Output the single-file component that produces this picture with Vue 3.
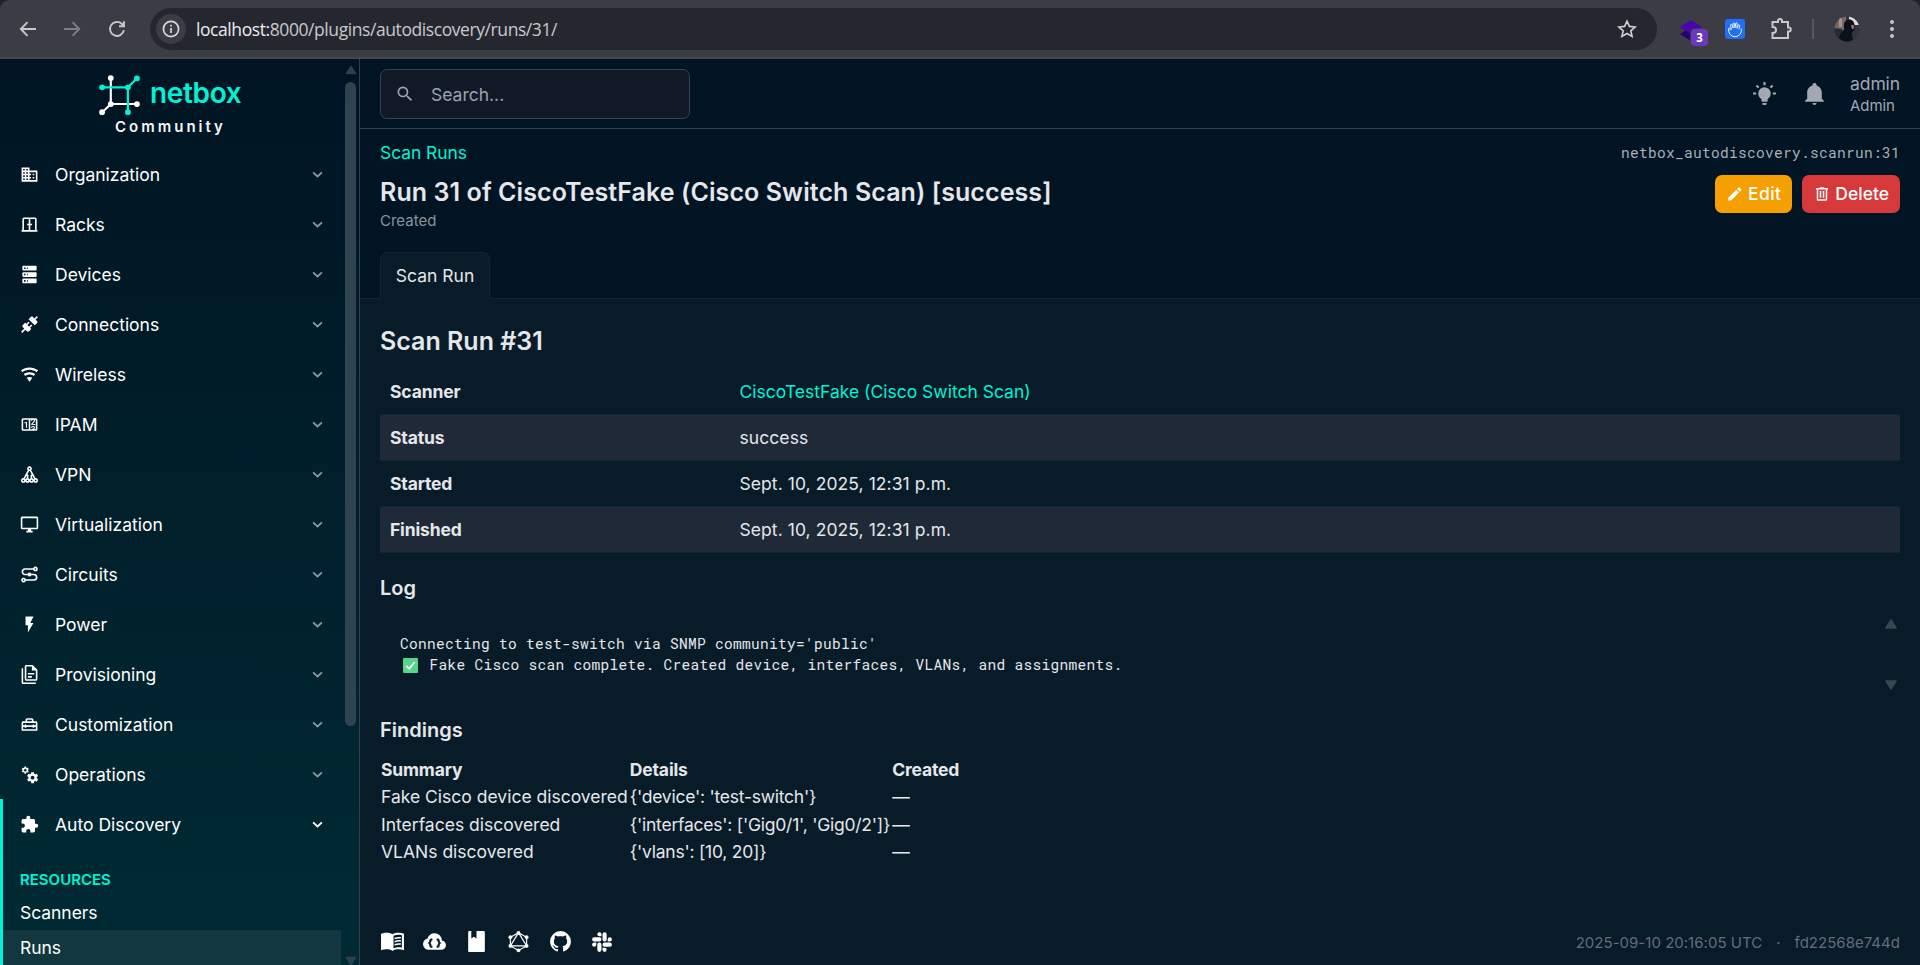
<script setup>
const icons = {
  domain: 'M18,15H16V17H18M18,11H16V13H18M20,19H12V17H14V15H12V13H14V11H12V9H20M10,7H8V5H10M10,11H8V9H10M10,15H8V13H10M10,19H8V17H10M6,7H4V5H6M6,11H4V9H6M6,15H4V13H6M6,19H4V17H6M12,7V3H2V21H22V7H12Z',
  door: 'M19,3H5A2,2 0 0,0 3,5V19H2V21H22V19H21V5A2,2 0 0,0 19,3M11,19H5V5H11V11H9V13H11V19M19,19H13V13H15V11H13V5H19V19Z',
  server: 'M4,1H20A1,1 0 0,1 21,2V6A1,1 0 0,1 20,7H4A1,1 0 0,1 3,6V2A1,1 0 0,1 4,1M4,9H20A1,1 0 0,1 21,10V14A1,1 0 0,1 20,15H4A1,1 0 0,1 3,14V10A1,1 0 0,1 4,9M4,17H20A1,1 0 0,1 21,18V22A1,1 0 0,1 20,23H4A1,1 0 0,1 3,22V18A1,1 0 0,1 4,17M9,5H10V3H9V5M9,13H10V11H9V13M9,21H10V19H9V21M5,3V5H7V3H5M5,11V13H7V11H5M5,19V21H7V19H5Z',
  connection: 'M21.4 7.5C22.2 8.3 22.2 9.6 21.4 10.3L18.6 13.1L10.8 5.3L13.6 2.5C14.4 1.7 15.7 1.7 16.4 2.5L18.2 4.3L21.2 1.3L22.6 2.7L19.6 5.7L21.4 7.5M15.6 13.3L14.2 11.9L11.4 14.7L9.3 12.6L12.1 9.8L10.7 8.4L7.9 11.2L6.4 9.8L3.6 12.6C2.8 13.4 2.8 14.7 3.6 15.4L5.4 17.2L1.4 21.2L2.8 22.6L6.8 18.6L8.6 20.4C9.4 21.2 10.7 21.2 11.4 20.4L14.2 17.6L12.8 16.2L15.6 13.3Z',
  wifi: 'M12,21L15.6,16.2C14.6,15.45 13.35,15 12,15C10.65,15 9.4,15.45 8.4,16.2L12,21M12,3C7.95,3 4.21,4.34 1.2,6.6L3,9C5.5,7.12 8.62,6 12,6C15.38,6 18.5,7.12 21,9L22.8,6.6C19.79,4.34 16.05,3 12,3M12,9C9.3,9 6.81,9.89 4.8,11.4L6.6,13.8C8.1,12.67 9.97,12 12,12C14.03,12 15.9,12.67 17.4,13.8L19.2,11.4C17.19,9.89 14.7,9 12,9Z',
  counter: 'M4,4H20A2,2 0 0,1 22,6V18A2,2 0 0,1 20,20H4A2,2 0 0,1 2,18V6A2,2 0 0,1 4,4M4,6V18H11V6H4M20,18V6H18.76C19,6.54 18.95,7.07 18.95,7.13C18.88,7.8 18.41,8.5 18.24,8.75L15.91,11.3L19.23,11.28L19.24,12.5L14.04,12.47L14,11.47C14,11.47 17.05,8.24 17.2,7.95C17.34,7.67 17.91,6 16.5,6C15.27,6.05 15.41,7.3 15.41,7.3L13.87,7.31C13.87,7.31 13.88,6.65 14.25,6H13V18H15.58L15.57,17.14L16.54,17.13C16.54,17.13 17.45,16.97 17.46,16.08C17.5,15.08 16.65,15.08 16.5,15.08C16.37,15.08 15.43,15.13 15.43,15.95H13.91C13.91,15.95 13.95,13.89 16.5,13.89C19.1,13.89 18.96,15.91 18.96,15.91C18.96,15.91 19,17.16 17.85,17.63L18.37,18H20M8.92,16H7.42V10.2L5.62,10.76V9.53L8.76,8.41H8.92V16Z',
  monitor: 'M21,16H3V4H21M21,2H3C1.89,2 1,2.89 1,4V16A2,2 0 0,0 3,18H10V20H8V22H16V20H14V18H21A2,2 0 0,0 23,16V4C23,2.89 22.1,2 21,2Z',
  flash: 'M7,2V13H10V22L17,10H13L17,2H7Z',
  files: 'M16,0H8C6.9,0 6,0.9 6,2V18C6,19.1 6.9,20 8,20H20C21.1,20 22,19.1 22,18V6L16,0M20,18H8V2H15V7H20V18M4,4V22H20V24H4C2.9,24 2,23.1 2,22V4H4M10,10V12H18V10H10M10,14V16H15V14H10Z',
  toolbox: 'M20,8H17V6C17,4.9 16.1,4 15,4H9C7.9,4 7,4.9 7,6V8H4C2.9,8 2,8.9 2,10V20H22V10C22,8.9 21.1,8 20,8M9,6H15V8H9V6M20,18H4V15H6V16H8V15H16V16H18V15H20V18M18,13V12H16V13H8V12H6V13H4V10H20V13H18Z',
  cogs: 'M15.9,18.45C17.25,18.45 18.35,17.35 18.35,16C18.35,14.65 17.25,13.55 15.9,13.55C14.54,13.55 13.45,14.65 13.45,16C13.45,17.35 14.54,18.45 15.9,18.45M21.1,16.68L22.58,17.84C22.71,17.95 22.75,18.13 22.66,18.29L21.26,20.71C21.17,20.86 21,20.92 20.83,20.86L19.09,20.16C18.73,20.44 18.33,20.67 17.91,20.85L17.64,22.7C17.62,22.87 17.47,23 17.3,23H14.5C14.32,23 14.18,22.87 14.15,22.7L13.89,20.85C13.46,20.67 13.07,20.44 12.71,20.16L10.96,20.86C10.81,20.92 10.62,20.86 10.54,20.71L9.14,18.29C9.05,18.13 9.09,17.95 9.22,17.84L10.7,16.68L10.65,16L10.7,15.31L9.22,14.16C9.09,14.05 9.05,13.86 9.14,13.71L10.54,11.29C10.62,11.13 10.81,11.07 10.96,11.13L12.71,11.84C13.07,11.56 13.46,11.32 13.89,11.15L14.15,9.29C14.18,9.13 14.32,9 14.5,9H17.3C17.47,9 17.62,9.13 17.64,9.29L17.91,11.15C18.33,11.32 18.73,11.56 19.09,11.84L20.83,11.13C21,11.07 21.17,11.13 21.26,11.29L22.66,13.71C22.75,13.86 22.71,14.05 22.58,14.16L21.1,15.31L21.15,16L21.1,16.68M6.69,8.07C7.56,8.07 8.26,7.37 8.26,6.5C8.26,5.63 7.56,4.92 6.69,4.92A1.58,1.58 0 0,0 5.11,6.5C5.11,7.37 5.82,8.07 6.69,8.07M10.03,6.94L11,7.68C11.07,7.75 11.09,7.87 11.03,7.97L10.13,9.53C10.08,9.63 9.96,9.67 9.86,9.63L8.74,9.18L8,9.62L7.81,10.81C7.79,10.92 7.7,11 7.59,11H5.79C5.67,11 5.58,10.92 5.56,10.81L5.4,9.62L4.64,9.18L3.52,9.63C3.41,9.67 3.3,9.63 3.24,9.53L2.34,7.97C2.28,7.87 2.31,7.75 2.39,7.68L3.34,6.94L3.31,6.5L3.34,6.06L2.39,5.32C2.31,5.25 2.28,5.13 2.34,5.03L3.24,3.47C3.3,3.37 3.41,3.33 3.52,3.37L4.63,3.82L5.4,3.38L5.56,2.19C5.58,2.08 5.67,2 5.79,2H7.59C7.7,2 7.79,2.08 7.81,2.19L8,3.38L8.74,3.82L9.86,3.37C9.96,3.33 10.08,3.37 10.13,3.47L11.03,5.03C11.09,5.13 11.07,5.25 11,5.32L10.03,6.06L10.06,6.5L10.03,6.94Z',
  puzzle: 'M20.5,11H19V7C19,5.89 18.1,5 17,5H13V3.5A2.5,2.5 0 0,0 10.5,1A2.5,2.5 0 0,0 8,3.5V5H4A2,2 0 0,0 2,7V10.8H3.5C5,10.8 6.2,12 6.2,13.5C6.2,15 5,16.2 3.5,16.2H2V20A2,2 0 0,0 4,22H7.8V20.5C7.8,19 9,17.8 10.5,17.8C12,17.8 13.2,19 13.2,20.5V22H17A2,2 0 0,0 19,20V16H20.5A2.5,2.5 0 0,0 23,13.5A2.5,2.5 0 0,0 20.5,11Z',
  magnify: 'M9.5,3A6.5,6.5 0 0,1 16,9.5C16,11.11 15.41,12.59 14.44,13.73L14.71,14H15.5L20.5,19L19,20.5L14,15.5V14.71L13.73,14.44C12.59,15.41 11.11,16 9.5,16A6.5,6.5 0 0,1 3,9.5A6.5,6.5 0 0,1 9.5,3M9.5,5C7,5 5,7 5,9.5C5,12 7,14 9.5,14C12,14 14,12 14,9.5C14,7 12,5 9.5,5Z',
  pencil: 'M20.71,7.04C21.1,6.65 21.1,6 20.71,5.63L18.37,3.29C18,2.9 17.35,2.9 16.96,3.29L15.12,5.12L18.87,8.87M3,17.25V21H6.75L17.81,9.93L14.06,6.18L3,17.25Z',
  trash: 'M9,3V4H4V6H5V19A2,2 0 0,0 7,21H17A2,2 0 0,0 19,19V6H20V4H15V3H9M7,6H17V19H7V6M9,8V17H11V8H9M13,8V17H15V8H13Z',
  bulb: 'M12,6A6,6 0 0,1 18,12C18,14.22 16.79,16.16 15,17.2V19A1,1 0 0,1 14,20H10A1,1 0 0,1 9,19V17.2C7.21,16.16 6,14.22 6,12A6,6 0 0,1 12,6M14,21V22A1,1 0 0,1 13,23H11A1,1 0 0,1 10,22V21H14M20,11H23V13H20V11M1,11H4V13H1V11M13,1V4H11V1H13M4.92,3.5L7.05,5.64L5.63,7.05L3.5,4.93L4.92,3.5M16.95,5.63L19.07,3.5L20.5,4.93L18.37,7.05L16.95,5.63Z',
  bell: 'M21,19V20H3V19L5,17V11C5,7.9 7.03,5.17 10,4.29C10,4.19 10,4.1 10,4A2,2 0 0,1 12,2A2,2 0 0,1 14,4C14,4.1 14,4.19 14,4.29C16.97,5.17 19,7.9 19,11V17L21,19M14,21A2,2 0 0,1 12,23A2,2 0 0,1 10,21',
  bookOpen: 'M12,5C10.2,3.9 8.2,3.5 6.2,3.5C4.3,3.5 2.4,3.9 1,4.6V20.5C2.5,19.8 4.3,19.5 6,19.5C8.2,19.5 10.3,19.9 12,21C13.7,19.9 15.8,19.5 18,19.5C19.7,19.5 21.5,19.8 23,20.5V4.6C21.5,3.9 19.7,3.5 17.8,3.5C15.8,3.5 13.8,3.9 12,5M21,18C18.3,17.3 15.5,17.5 13,18.7V6.5C15.6,5.4 18.3,5.1 21,5.9V18M14,8.4V9.9C16,9.1 18,8.9 20,9.2V7.7C18,7.4 16,7.6 14,8.4M14,11.4V12.9C16,12.1 18,11.9 20,12.2V10.7C18,10.4 16,10.6 14,11.4M14,14.4V15.9C16,15.1 18,14.9 20,15.2V13.7C18,13.4 16,13.6 14,14.4Z',
  cloud: 'M6.5 20Q4.22 20 2.61 18.43 1 16.85 1 14.58 1 12.63 2.17 11.1 3.35 9.57 5.25 9.15 5.88 6.85 7.75 5.43 9.63 4 12 4 14.93 4 16.96 6.04 19 8.07 19 11 20.73 11.2 21.86 12.5 23 13.78 23 15.5 23 17.38 21.69 18.69 20.38 20 18.5 20ZM10,9H9A2,2 0 0,0 7,11V12L6,13V14L7,15V16A2,2 0 0,0 9,18H10V16H9V14.5L8,13.500L9,12.500V11H10ZM14,9H15A2,2 0 0,1 17,11V12L18,13V14L17,15V16A2,2 0 0,1 15,18H14V16H15V14.5L16,13.500L15,12.500V11H14Z',
  book: 'M19,22A1,1 0 0,0 20,21V3A1,1 0 0,0 19,2H12V9L9.5,7.5L7,9V2H5A1,1 0 0,0 4,3V21A1,1 0 0,0 5,22H19Z',
  github: 'M12,2A10,10 0 0,0 2,12C2,16.42 4.87,20.17 8.84,21.5C9.34,21.58 9.5,21.27 9.5,21C9.5,20.77 9.5,20.14 9.5,19.31C6.73,19.91 6.14,17.97 6.14,17.97C5.68,16.81 5.03,16.5 5.03,16.5C4.12,15.88 5.1,15.9 5.1,15.9C6.1,15.97 6.63,16.93 6.63,16.93C7.5,18.45 8.97,18 9.54,17.76C9.63,17.11 9.89,16.67 10.17,16.42C7.95,16.17 5.62,15.31 5.62,11.5C5.62,10.39 6,9.5 6.65,8.79C6.55,8.54 6.2,7.5 6.75,6.15C6.75,6.15 7.59,5.88 9.5,7.17C10.29,6.95 11.15,6.84 12,6.84C12.85,6.84 13.71,6.95 14.5,7.17C16.41,5.88 17.25,6.15 17.25,6.15C17.8,7.5 17.45,8.54 17.35,8.79C18,9.5 18.38,10.39 18.38,11.5C18.38,15.32 16.04,16.16 13.81,16.41C14.17,16.72 14.5,17.33 14.5,18.26C14.5,19.6 14.5,20.68 14.5,21C14.5,21.27 14.66,21.59 15.17,21.5C19.14,20.16 22,16.42 22,12A10,10 0 0,0 12,2Z',
  slack: 'M6,15A2,2 0 0,1 4,17A2,2 0 0,1 2,15A2,2 0 0,1 4,13H6V15M7,15A2,2 0 0,1 9,13A2,2 0 0,1 11,15V20A2,2 0 0,1 9,22A2,2 0 0,1 7,20V15M9,7A2,2 0 0,1 7,5A2,2 0 0,1 9,3A2,2 0 0,1 11,5V7H9M9,8A2,2 0 0,1 11,10A2,2 0 0,1 9,12H4A2,2 0 0,1 2,10A2,2 0 0,1 4,8H9M17,10A2,2 0 0,1 19,8A2,2 0 0,1 21,10A2,2 0 0,1 19,12H17V10M16,10A2,2 0 0,1 14,12A2,2 0 0,1 12,10V5A2,2 0 0,1 14,3A2,2 0 0,1 16,5V10M14,18A2,2 0 0,1 16,20A2,2 0 0,1 14,22A2,2 0 0,1 12,20V18H14M14,17A2,2 0 0,1 12,15A2,2 0 0,1 14,13H19A2,2 0 0,1 21,15A2,2 0 0,1 19,17H14Z'
}

// Icons drawn with strokes instead of fills
const lineIcons = {
  graph: 'M12 2.600a2 2 0 1 0 .01 0M4.200 17.500a2 2 0 1 0 .01 0M9.400 17.500a2 2 0 1 0 .01 0M14.600 17.500a2 2 0 1 0 .01 0M19.800 17.500a2 2 0 1 0 .01 0M11 6.500L5 17.600M13 6.500L19 17.600M8.300 12.200L9.800 13.500L9.400 17.500M15.700 12.200L14.200 13.500L14.600 17.500',
  transit: 'M19.500 3a2 2 0 1 0 .01 0M4.500 17a2 2 0 1 0 .01 0M17.400 5H6.500a3.500 3.500 0 0 0 0 7H17.500a3.500 3.500 0 0 1 0 7H6.600M12 10.500a1.500 1.500 0 1 0 .01 0'
}

const menu = [
  { label: 'Organization', icon: 'domain' },
  { label: 'Racks', icon: 'door' },
  { label: 'Devices', icon: 'server' },
  { label: 'Connections', icon: 'connection' },
  { label: 'Wireless', icon: 'wifi' },
  { label: 'IPAM', icon: 'counter' },
  { label: 'VPN', icon: 'graph' },
  { label: 'Virtualization', icon: 'monitor' },
  { label: 'Circuits', icon: 'transit' },
  { label: 'Power', icon: 'flash' },
  { label: 'Provisioning', icon: 'files' },
  { label: 'Customization', icon: 'toolbox' },
  { label: 'Operations', icon: 'cogs' }
]

const details = [
  { name: 'Scanner', value: 'CiscoTestFake (Cisco Switch Scan)', link: true },
  { name: 'Status', value: 'success' },
  { name: 'Started', value: 'Sept. 10, 2025, 12:31 p.m.' },
  { name: 'Finished', value: 'Sept. 10, 2025, 12:31 p.m.' }
]

const findings = [
  ['Fake Cisco device discovered', "{'device': 'test-switch'}"],
  ['Interfaces discovered', "{'interfaces': ['Gig0/1', 'Gig0/2']}"],
  ['VLANs discovered', "{'vlans': [10, 20]}"]
]
</script>

<template>
  <div class="screen">
    <div class="browser-bar">
      <div class="bar-inner">
        <svg class="nav-ic back" viewBox="0 0 20 20"><path d="M18 10H3M9.5 3.2L2.8 10l6.7 6.8" /></svg>
        <svg class="nav-ic fwd" viewBox="0 0 20 20"><path d="M2 10h15M10.5 3.2L17.2 10l-6.7 6.8" /></svg>
        <svg class="nav-ic reload" viewBox="0 0 20 20"><path d="M16.900 11.2A7 7 0 1 1 15 5L17 7M17 2.200V7.2H12" /></svg>
        <div class="omnibox">
          <span class="info">
            <svg viewBox="0 0 18 18"><circle cx="9" cy="9" r="7.6" /><path d="M9 8v5M9 4.8v1.7" /></svg>
          </span>
          <span class="url"><b>localhost:</b>8000/plugins/autodiscovery/runs/31/</span>
          <svg class="star" viewBox="0 0 20 20"><path d="M10 2.2l2.4 5.2 5.7.6-4.3 3.8 1.3 5.6L10 14.5l-5.1 2.9 1.3-5.6L1.9 8l5.7-.6z" /></svg>
        </div>
        <div class="extensions">
          <div class="ext-layers">
            <svg viewBox="0 0 22 22"><path fill="#24036e" d="M11 8l11 7-11 7L0 15z" /><path fill="#4a05ad" d="M11 1l11 7-11 7L0 8z" /></svg>
            <span class="badge">3</span>
          </div>
          <div class="ext-hand">
            <svg viewBox="0 0 20 20"><path d="M4.2 11.5c-.7-2-.2-2.8.5-2.7.8.2 1 1.3 1.6 2L5.6 6.2c0-1 1.3-1.1 1.6-.2l.9 3L8 4.7c.1-1 1.5-1 1.6 0l.4 4.1.7-4.4c.3-.9 1.5-.8 1.5.2l-.2 4.6 1.3-3c.5-.8 1.5-.4 1.4.5l-.8 3.5M3.9 9.4A6.4 6.4 0 1 0 16.1 9.400" /></svg>
          </div>
          <svg class="ext-puzzle" viewBox="0 0 22 22"><path d="M2.500 4H8V3a1.800 1.800 0 0 1 4 0v1h6v5.500h.8a1.800 1.800 0 0 1 0 4H18V20H2.500v-5H3a2.600 2.600 0 0 0 0-6h-.5z" /></svg>
          <span class="divider"></span>
          <svg class="avatar" viewBox="0 0 26 26">
            <defs><clipPath id="face"><circle cx="13" cy="13" r="12.500" /></clipPath></defs>
            <g clip-path="url(#face)">
              <rect width="26" height="26" fill="#30363c" />
              <rect width="12" height="14" fill="#79675f" /><rect x="5" width="3" height="11" fill="#a69287" />
              <rect x="15" width="11" height="9" fill="#e2ddd8" /><path d="M0 12l8 1v10H0z" fill="#222d33" />
              <path d="M10 9c0-7 10-7.500 10.500 0v5l-3 3 2 9H4c1-6 3-10 6-12z" fill="#0a111a" /><path d="M17 9h2.500l.6 3-2 1.500z" fill="#a57c6b" />
            </g>
          </svg>
          <svg class="kebab" viewBox="0 0 6 20"><circle cx="3" cy="3" r="2" /><circle cx="3" cy="10" r="2" /><circle cx="3" cy="17" r="2" /></svg>
        </div>
      </div>
    </div>

    <div class="page">
      <aside class="sidebar">
        <div class="side-main">
          <div class="brand">
            <div class="brand-row">
              <svg class="logo" viewBox="0 0 40 40">
                <g stroke="#fff" stroke-width="2.100" fill="none"><path d="M11.500 4V29.300H36.500M11.500 29.300L3 37.500" /></g>
                <g fill="#fff"><circle cx="11.500" cy="4" r="2.800" /><circle cx="11.500" cy="29.300" r="2.800" /><circle cx="37" cy="29.300" r="2.800" /><circle cx="3" cy="37.200" r="2.800" /></g>
                <g stroke="#00f2d4" stroke-width="2.100" fill="none"><path d="M3 13H28.200V37.500M28.200 13L37 4.300" /></g>
                <g fill="#00f2d4"><circle cx="3" cy="13" r="2.800" /><circle cx="28.200" cy="13" r="2.800" /><circle cx="37" cy="4.300" r="2.800" /><circle cx="28.200" cy="37.200" r="2.800" /></g>
              </svg>
              <span class="wordmark">netbox</span>
            </div>
            <div class="edition">Community</div>
          </div>
          <nav>
            <a v-for="m in menu" :key="m.label" class="item">
              <svg v-if="icons[m.icon]" class="mdi" viewBox="0 0 24 24"><path fill-rule="evenodd" :d="icons[m.icon]" /></svg>
              <svg v-else class="mdi line" viewBox="0 0 24 24"><path :d="lineIcons[m.icon]" /></svg>
              <span>{{ m.label }}</span>
              <svg class="chev" viewBox="0 0 10 6"><path d="M1 1l4 3.800L9 1" /></svg>
            </a>
            <div class="open-group">
              <a class="item">
                <svg class="mdi" viewBox="0 0 24 24"><path :d="icons.puzzle" /></svg>
                <span>Auto Discovery</span>
                <svg class="chev bright" viewBox="0 0 10 6"><path d="M1 1l4 3.800L9 1" /></svg>
              </a>
              <div class="group-title">Resources</div>
              <a class="sub">Scanners</a>
              <a class="sub active">Runs</a>
            </div>
          </nav>
        </div>
        <div class="scrollbar">
          <svg class="arrow" viewBox="0 0 12 10"><path d="M6 1.500L10.500 8.500h-9z" /></svg>
          <div class="thumb"></div>
          <svg class="arrow" viewBox="0 0 12 10"><path d="M6 8.500L1.500 1.500h9z" /></svg>
        </div>
      </aside>

      <main class="main">
        <header class="topbar">
          <div class="search">
            <svg viewBox="0 0 24 24"><path :d="icons.magnify" /></svg>
            <span>Search...</span>
          </div>
          <div class="user-area">
            <svg class="top-ic" viewBox="0 0 24 24"><path :d="icons.bulb" /></svg>
            <svg class="top-ic bell" viewBox="0 0 24 24"><path :d="icons.bell" /></svg>
            <div class="user"><div class="uname">admin</div><div class="urole">Admin</div></div>
          </div>
        </header>

        <section class="head">
          <div class="head-left">
            <a class="crumb">Scan Runs</a>
            <h1>Run 31 of CiscoTestFake (Cisco Switch Scan) [success]</h1>
            <div class="created">Created</div>
          </div>
          <div class="head-right">
            <code>netbox_autodiscovery.scanrun:31</code>
            <div class="actions">
              <button class="btn edit"><svg viewBox="0 0 24 24"><path :d="icons.pencil" /></svg><span>Edit</span></button>
              <button class="btn delete"><svg viewBox="0 0 24 24"><path fill-rule="evenodd" :d="icons.trash" /></svg><span>Delete</span></button>
            </div>
          </div>
        </section>
        <div class="tabs"><div class="tab">Scan Run</div></div>

        <section class="content">
          <h2>Scan Run #31</h2>
          <div class="details">
            <div v-for="d in details" :key="d.name" class="drow">
              <b>{{ d.name }}</b>
              <span :class="{ link: d.link }">{{ d.value }}</span>
            </div>
          </div>
          <h3 class="log-title">Log</h3>
          <div class="log">
            <div class="log-text">
              <div>Connecting to test-switch via SNMP community='public'</div>
              <div class="log-line">
                <svg class="check" viewBox="0 0 16 16"><rect width="16" height="16" rx="1" fill="#54d58a" /><path d="M3.500 8.300l3 3.200 6-7.300" /></svg>
                <span>Fake Cisco scan complete. Created device, interfaces, VLANs, and assignments.</span>
              </div>
            </div>
            <div class="log-scroll">
              <svg viewBox="0 0 14 12"><path d="M7 2L12 10H2z" /></svg>
              <svg viewBox="0 0 14 12"><path d="M7 10L2 2h10z" /></svg>
            </div>
          </div>
          <h3 class="find-title">Findings</h3>
          <table class="findings">
            <thead><tr><th>Summary</th><th>Details</th><th>Created</th></tr></thead>
            <tbody>
              <tr v-for="f in findings" :key="f[0]"><td>{{ f[0] }}</td><td class="json">{{ f[1] }}</td><td>—</td></tr>
            </tbody>
          </table>
          <footer class="footer">
            <div class="links">
              <svg viewBox="0 0 24 24"><path fill-rule="evenodd" :d="icons.bookOpen" /></svg>
              <svg viewBox="0 0 24 24"><path fill-rule="evenodd" :d="icons.cloud" /></svg>
              <svg viewBox="0 0 24 24"><path :d="icons.book" /></svg>
              <svg viewBox="0 0 24 24">
                <path d="M12 3.500l7.800 4.400v8.300L12 20.600l-7.800-4.400V7.900zM12 3.500L4.200 16.200h15.600z" fill="none" stroke="#fff" stroke-width="1.100" />
                <circle cx="12" cy="3.700" r="1.800" /><circle cx="19.800" cy="7.900" r="1.800" /><circle cx="19.800" cy="16.200" r="1.800" /><circle cx="12" cy="20.400" r="1.800" /><circle cx="4.200" cy="16.200" r="1.800" /><circle cx="4.200" cy="7.900" r="1.800" />
              </svg>
              <svg viewBox="0 0 24 24"><path :d="icons.github" /></svg>
              <svg viewBox="0 0 24 24"><path :d="icons.slack" /></svg>
            </div>
            <div class="stamp"><span>2025-09-10 20:16:05 UTC</span><span>·</span><span>fd22568e744d</span></div>
          </footer>
        </section>
      </main>
    </div>
  </div>
</template>

<style>
html, body { margin: 0; overflow: hidden; background: #001423; }
</style>

<style scoped>
* { box-sizing: border-box; }
.screen { width: 1920px; height: 965px; overflow: hidden; display: flex; flex-direction: column; font-family: Inter, sans-serif; font-size: 17.5px; color: #e5e7eb; }
.browser-bar { flex: none; height: 59px; background: #1f2025; }
.bar-inner { height: 59px; background: #3b3c44; border-bottom: 2px solid #49464b; border-radius: 9px 9px 0 0; display: flex; align-items: center; padding: 0 17px 0 18px; }
.nav-ic { width: 20px; height: 20px; fill: none; stroke: #c7c8cc; stroke-width: 1.9; flex: none; }
.nav-ic.fwd { stroke: #7d7e84; margin-left: 24px; }
.nav-ic.reload { margin-left: 25px; }
.omnibox { margin-left: 23px; width: 1507px; height: 42px; border-radius: 21px; background: #25272f; display: flex; align-items: center; padding: 0 20px 0 6px; flex: none; }
.info { width: 30px; height: 30px; border-radius: 50%; background: #3b3c44; display: flex; align-items: center; justify-content: center; }
.info svg { width: 18px; height: 18px; fill: none; stroke: #d8d9dc; stroke-width: 1.700; }
.url { margin-left: 10px; font-family: "Open Sans", sans-serif; font-size: 17.500px; letter-spacing: -0.420px; color: #c8c9cd; white-space: nowrap; }
.url b { font-weight: 400; color: #ececef; }
.star { margin-left: auto; width: 20px; height: 20px; fill: none; stroke: #cfd0d4; stroke-width: 1.600; }
.extensions { margin-left: auto; display: flex; align-items: center; }
.ext-layers { position: relative; width: 28px; height: 28px; }
.ext-layers svg { width: 22px; height: 22px; display: block; margin-top: 4px; margin-left: -1px; }
.badge { position: absolute; left: 10px; top: 14px; width: 17px; height: 17px; border-radius: 4px; background: #6b38bd; box-shadow: 0 0 0 1px #3b3c44; color: #fff; font: 700 11.500px/17px "Open Sans", sans-serif; text-align: center; }
.ext-hand { margin-left: 16px; width: 20px; height: 20px; border-radius: 3px; background: #226ef4; }
.ext-hand svg { display: block; width: 20px; height: 20px; fill: none; stroke: #e8f0ff; stroke-width: 1; }
.ext-puzzle { margin-left: 25px; width: 22px; height: 22px; fill: none; stroke: #c7c8cc; stroke-width: 2; }
.divider { width: 2px; height: 20px; background: #56575f; margin-left: 20px; }
.avatar { width: 26px; height: 26px; margin-left: 20px; }
.kebab { width: 6px; height: 20px; margin-left: 29px; margin-right: 8px; fill: #c7c8cc; }

.page { flex: 1; display: flex; min-height: 0; }
.sidebar { width: 360px; flex: none; border-right: 1px solid #333f50; background: linear-gradient(180deg, #001423, #002b34); display: flex; justify-content: space-between; overflow: hidden; }
.side-main { width: 341px; }
.brand { height: 90px; padding-top: 14px; }
.brand-row { display: flex; align-items: center; height: 42px; padding-left: 99px; }
.logo { width: 41px; height: 41px; }
.wordmark { margin: -2px 0 0 10px; font-weight: 600; font-size: 28px; line-height: 36px; letter-spacing: -0.350px; color: #00f2d4; }
.edition { margin: 1px 0 0 115px; font-size: 15px; font-weight: 600; letter-spacing: 3px; line-height: 22px; color: #f3f4f6; }
.item { display: flex; align-items: center; height: 50px; padding: 0 18px 0 19.500px; color: #fff; }
.mdi { width: 19px; height: 19px; fill: #fff; margin-right: 16.500px; flex: none; }
.mdi.line path { fill: none; stroke: #fff; stroke-width: 2; }
.chev { width: 11px; height: 7px; margin-left: auto; fill: none; stroke: #8a99a4; stroke-width: 1.600; }
.chev.bright { stroke: #fff; }
.open-group { border-left: 3px solid #00f2d4; height: 200px; }
.open-group .item { padding-left: 16.500px; }
.group-title { height: 37px; padding: 21px 0 0 17px; line-height: 20px; font-size: 15px; font-weight: 600; color: #00f2d4; text-transform: uppercase; margin-bottom: 9px; }
.sub { display: block; height: 35px; line-height: 35px; padding-left: 17px; color: #fff; letter-spacing: -0.050px; }
.sub.active { background: #12373f; }
.scrollbar { width: 17px; display: flex; flex-direction: column; align-items: center; padding: 6px 0 0 0; }
.arrow { width: 12px; height: 10px; fill: #303f4d; stroke: #303f4d; stroke-width: 1.500; stroke-linejoin: round; flex: none; }
.thumb { margin: 7px 0 230px; height: 644px; width: 11px; border-radius: 6px; background: #30444f; flex: none; }

.main { flex: 1; min-width: 0; display: flex; flex-direction: column; background: #001423; }
.topbar { height: 70px; border-bottom: 1px solid #333f50; display: flex; justify-content: space-between; align-items: center; padding: 0 20px; flex: none; }
.search { width: 310px; height: 50px; border: 1px solid #374151; border-radius: 7px; background: #111827; display: flex; align-items: center; padding-left: 14px; color: #9ca3af; }
.search svg { width: 20px; height: 20px; fill: #9ca3af; margin-right: 16px; }
.search span { padding-top: 2px; }
.user-area { display: flex; align-items: center; color: #a0a8b4; }
.user { padding-top: 2px; }
.top-ic { width: 25px; height: 25px; fill: #a3a9b4; }
.bell { margin: 0 23px 0 25px; }
.uname { line-height: 22px; letter-spacing: -0.100px; }
.urole { font-size: 15px; line-height: 21px; letter-spacing: -0.100px; }
.head { height: 123px; padding: 0 20px; display: flex; justify-content: space-between; flex: none; }
.crumb { display: block; margin-top: 13px; line-height: 22px; color: #00f2d4; letter-spacing: -0.100px; }
h1 { margin: 12px 0 0; font-size: 25px; line-height: 32px; font-weight: 600; letter-spacing: 0.085px; white-space: nowrap; }
.created { margin-top: 3px; line-height: 20px; font-size: 15px; color: #8a929e; }
.head-right { display: flex; flex-direction: column; align-items: flex-end; }
code { margin-top: 13px; font: 14.500px/22px "Roboto Mono", "DejaVu Sans Mono", monospace; letter-spacing: 0.295px; color: #a9b0b9; }
.actions { display: flex; gap: 10px; margin-top: 11px; }
.btn { height: 38px; border: 0; border-radius: 7px; padding: 0 11px; display: flex; align-items: center; font: 500 17.500px Inter, sans-serif; color: #fff; }
.btn svg { width: 18px; height: 18px; fill: #fff; margin-right: 4px; }
.btn span { padding-bottom: 2px; }
.edit { background: #f59f00; width: 77px; letter-spacing: 0.400px; }
.delete { background: #d63939; }
.tabs { height: 47px; border-bottom: 1px solid #122430; padding-left: 20px; flex: none; }
.tab { width: 110px; height: 47px; border: 1px solid #122430; border-bottom: 0; border-radius: 7px 7px 0 0; background: #081b29; line-height: 46px; text-align: center; }
.content { flex: 1; min-height: 0; background: #081b29; padding: 0 20px; display: flex; flex-direction: column; }
h2 { margin: 26px 0 0; font-size: 25px; line-height: 32px; font-weight: 600; }
.details { margin-top: 12px; }
.drow { height: 46px; display: grid; grid-template-columns: 349.500px 1fr; align-items: center; padding: 0 10px; border-bottom: 1px solid #122736; letter-spacing: 0.070px; }
.drow:nth-child(even) { background: #1f2937; }
.drow b { font-weight: 700; letter-spacing: -0.150px; }
.drow .link { letter-spacing: 0; }
.link { color: #00f2d4; }
h3 { font-size: 20px; line-height: 26px; font-weight: 600; margin: 0; }
.log-title { margin-top: 22px; }
.log { margin-top: 12px; height: 93px; display: flex; justify-content: space-between; padding: 20px 2px 0 20px; font: 14.500px/21.400px "Roboto Mono", "DejaVu Sans Mono", monospace; letter-spacing: 0.300px; white-space: nowrap; }
.log-line { display: flex; align-items: center; }
.check { width: 15px; height: 15px; margin: 0 11.500px 0 3px; }
.check path { fill: none; stroke: #fff; stroke-width: 1.800; }
.log-scroll { margin-top: -15px; width: 14px; display: flex; flex-direction: column; justify-content: space-between; height: 73px; }
.log-scroll svg { width: 14px; height: 12px; fill: #394753; stroke: #394753; stroke-width: 1.500; stroke-linejoin: round; }
.find-title { margin-top: 11px; }
.findings { margin-top: 13px; border-collapse: separate; border-spacing: 0; align-self: flex-start; }
.findings th, .findings td { text-align: left; padding: 0 1px; height: 27.300px; line-height: 25px; white-space: nowrap; }
.findings th { font-weight: 700; letter-spacing: -0.150px; }
.findings .json { letter-spacing: -0.235px; }
.footer { margin-top: auto; height: 46px; display: flex; align-items: center; justify-content: space-between; }
.links { display: flex; gap: 17px; margin-top: -2px; }
.links svg { width: 25px; height: 25px; fill: #fff; }
.stamp { display: flex; gap: 14px; font-size: 15px; color: #636c7a; letter-spacing: 0.020px; }
</style>
